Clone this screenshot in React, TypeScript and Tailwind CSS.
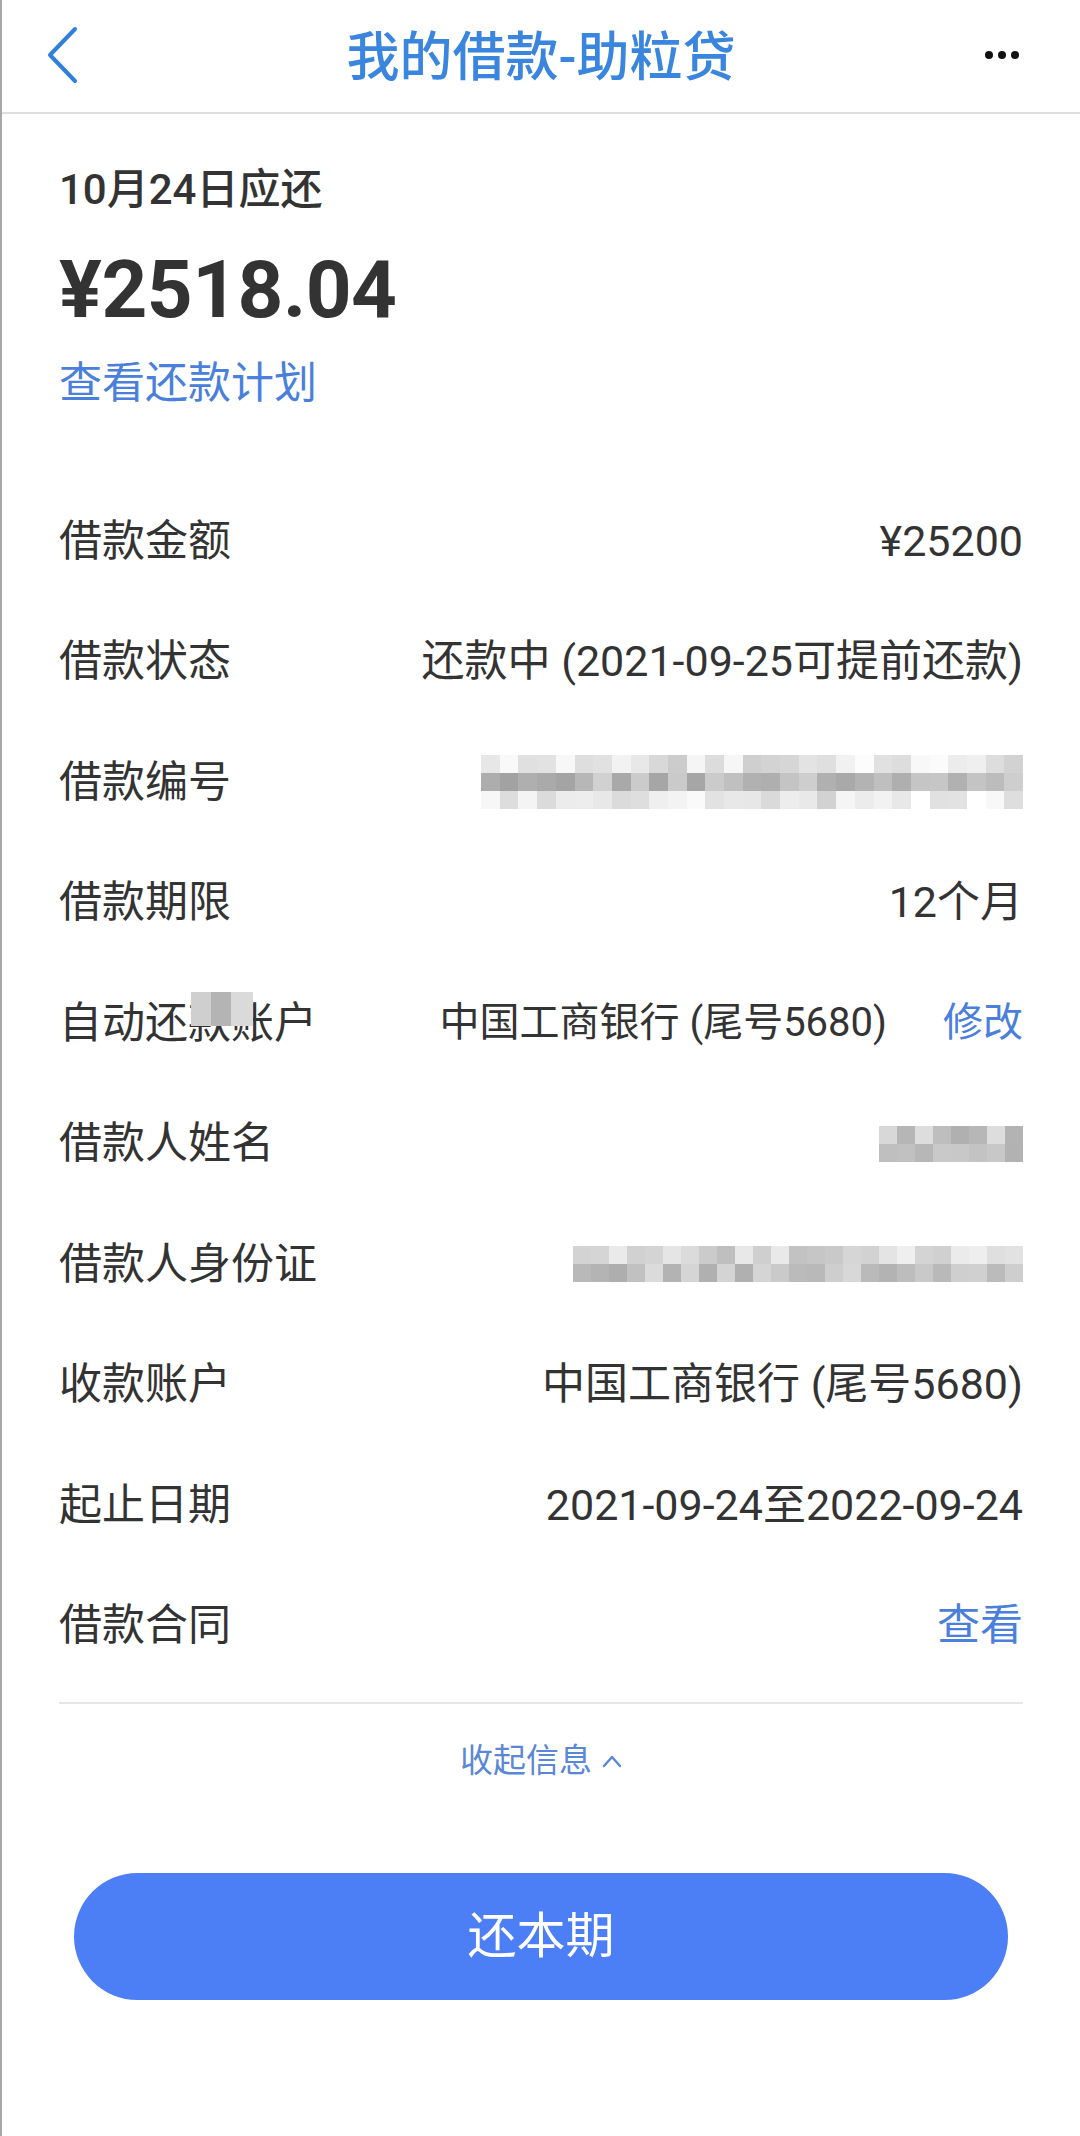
import React from "react";

const FONT = { fontFamily: '"Roboto", "Noto Sans CJK SC", sans-serif' };

function shade(seed: number, base: number, spread: number) {
  const x = Math.sin(seed * 12.9898) * 43758.5453;
  const f = x - Math.floor(x);
  const v = Math.round(base + (f - 0.5) * spread);
  return `rgb(${v},${v},${v})`;
}

function Mosaic({
  cols,
  rows,
  bw,
  bh,
  bases,
  seed,
}: {
  cols: number;
  rows: number;
  bw: number;
  bh: number;
  bases: number[];
  seed: number;
}) {
  const cells = [];
  for (let r = 0; r < rows; r++) {
    for (let c = 0; c < cols; c++) {
      cells.push(
        <div
          key={`${r}-${c}`}
          style={{
            width: bw,
            height: bh,
            background: shade(seed + r * 97 + c * 13, bases[r], 50),
          }}
        />
      );
    }
  }
  return (
    <div className="grid" style={{ gridTemplateColumns: `repeat(${cols}, ${bw}px)` }}>
      {cells}
    </div>
  );
}

function Row({ label, children }: { label: React.ReactNode; children?: React.ReactNode }) {
  return (
    <div className="flex h-[120.5px] items-center justify-between">
      <div className="text-[43px] leading-none text-[#333333]">{label}</div>
      <div className="flex items-center text-[43px] leading-none text-[#333333]">{children}</div>
    </div>
  );
}

export default function App() {
  return (
    <div className="min-h-[2136px] w-[1080px] border-l-2 border-[#a8a8a8] bg-white" style={FONT}>
      {/* Header */}
      <div className="relative flex h-[114px] items-center justify-center border-b-2 border-[#dedede]">
        <div className="absolute left-[43px] top-[26px]">
          <svg width="34" height="58" viewBox="0 0 34 58" fill="none">
            <path d="M30 3 L5 29 L30 55" stroke="#2f80db" strokeWidth="4" strokeLinecap="round" strokeLinejoin="round" />
          </svg>
        </div>
        <div className="pt-[4px] text-[53px] font-medium leading-none text-[#3a86df]">我的借款-助粒贷</div>
        <div className="absolute left-[983px] top-[51px] flex gap-[5px]">
          <div className="h-[8px] w-[8px] rounded-full bg-[#111]" />
          <div className="h-[8px] w-[8px] rounded-full bg-[#111]" />
          <div className="h-[8px] w-[8px] rounded-full bg-[#111]" />
        </div>
      </div>

      {/* Content */}
      <div className="pl-[57px] pr-[57px]">
        <div className="mt-[48px] text-[42px] font-medium leading-[56px] text-[#333333]">10月24日应还</div>
        <div className="mt-[22px] text-[80px] font-bold leading-[100px] tracking-[-0.5px] text-[#333333]">¥2518.04</div>
        <div className="mt-[15px] text-[43px] leading-[56px] text-[#4a80dc]">查看还款计划</div>

        <div className="mt-[70px]">
          <Row label="借款金额">¥25200</Row>
          <Row label="借款状态">还款中 (2021-09-25可提前还款)</Row>
          <Row label="借款编号">
            <Mosaic cols={29} rows={3} bw={18.7} bh={18} bases={[228, 185, 232]} seed={3} />
          </Row>
          <Row label="借款期限">12个月</Row>
          <Row
            label={
              <span className="relative">
                自动还款账户
                <span className="absolute left-[132px] top-[-6px] flex">
                  <span className="h-[34px] w-[20px] bg-[#cfcfcf]" />
                  <span className="h-[34px] w-[20px] bg-[#b4b4b4]" />
                  <span className="h-[34px] w-[22px] bg-[#dadada]" />
                </span>
              </span>
            }
          >
            <span className="text-[40px]">中国工商银行 (尾号5680)</span>
            <span className="ml-[56px] text-[40px] text-[#4a80dc]">修改</span>
          </Row>
          <Row label="借款人姓名">
            <Mosaic cols={8} rows={2} bw={18} bh={18} bases={[200, 180]} seed={11} />
          </Row>
          <Row label="借款人身份证">
            <Mosaic cols={25} rows={2} bw={18} bh={18} bases={[215, 195]} seed={29} />
          </Row>
          <Row label="收款账户">中国工商银行 (尾号5680)</Row>
          <Row label="起止日期">2021-09-24至2022-09-24</Row>
          <Row label="借款合同">
            <span className="text-[#4a80dc]">查看</span>
          </Row>
        </div>

        <div className="mt-[16px] h-[2px] bg-[#e6e6e6]" />

        <div className="mt-[35px] flex items-center justify-center gap-[10px] text-[#5b87d6]">
          <span className="text-[33px] leading-[44px]">收起信息</span>
          <svg width="20" height="14" viewBox="0 0 20 14" fill="none">
            <path d="M2 12 L10 3 L18 12" stroke="#5b87d6" strokeWidth="2.4" strokeLinecap="round" strokeLinejoin="round" />
          </svg>
        </div>
      </div>

      <div className="mx-[72px] mt-[90px] flex h-[127px] items-center justify-center rounded-full bg-[#4c7ef6]">
        <span className="text-[49px] leading-none text-white">还本期</span>
      </div>
    </div>
  );
}
